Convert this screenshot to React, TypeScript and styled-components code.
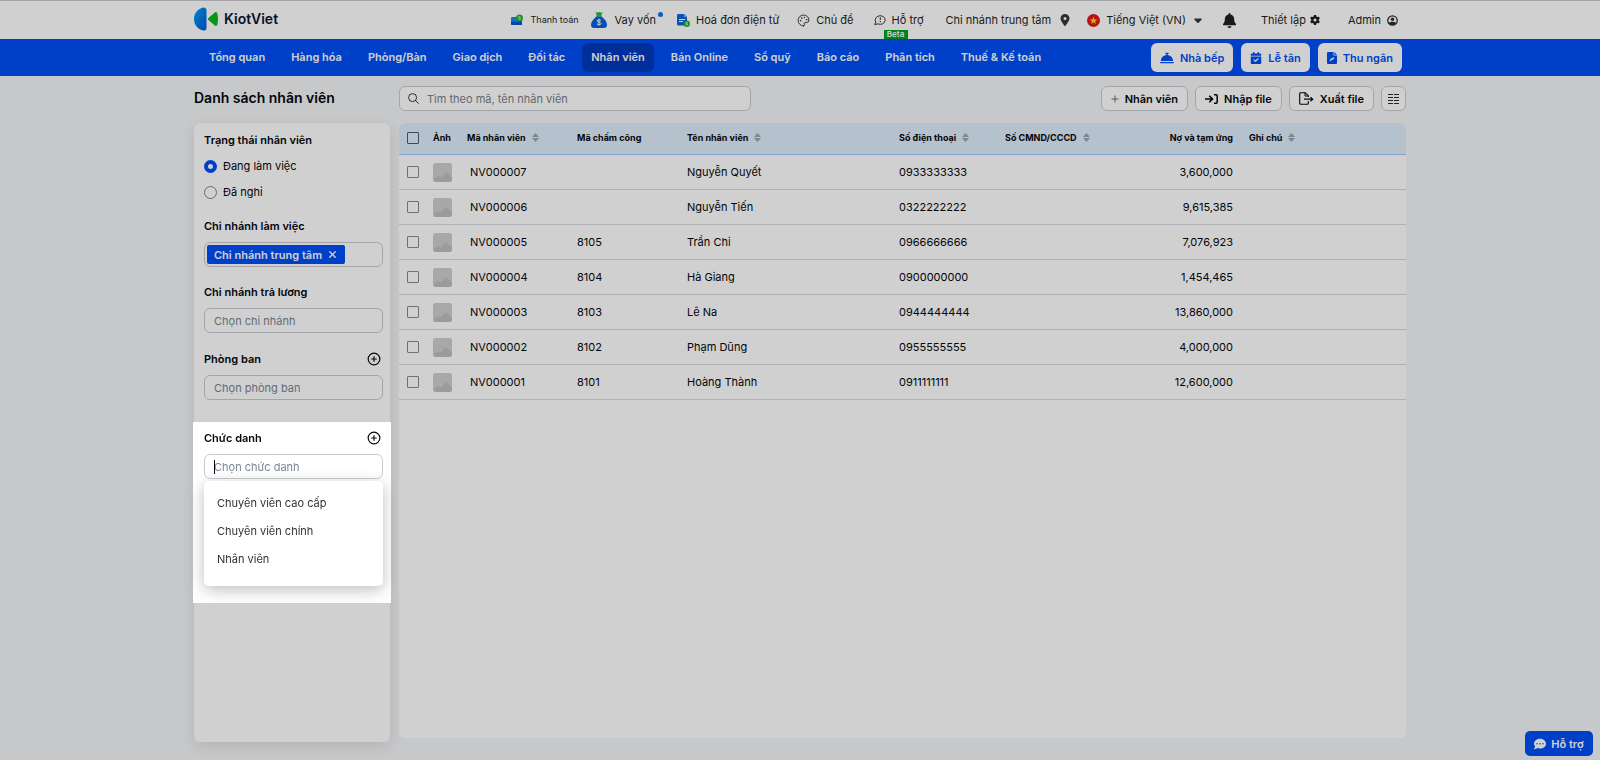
import React from "react";
import styled, { createGlobalStyle } from "styled-components";
import {
  FaBell,
  FaBellConcierge,
  FaCalendarCheck,
  FaCaretDown,
  FaCommentDots,
  FaGear,
  FaLocationDot,
  FaXmark,
} from "react-icons/fa6";
import { IoSearchOutline } from "react-icons/io5";
import { CirclePlus, Palette } from "lucide-react";

const BLUE = "#004ff5";
const LINE = "#c9cbcf";

const GlobalStyle = createGlobalStyle`
  *, *::before, *::after { box-sizing: border-box; }
  body {
    margin: 0;
    background: #f4f5f7;
    color: #05070b;
    font-family: Inter, "Noto Sans", sans-serif;
    font-size: 11px;
    line-height: 16px;
  }
  button, input { font: inherit; color: inherit; }
  button { cursor: pointer; }
  a { color: inherit; text-decoration: none; }
  svg { display: block; flex: none; }
`;

const Page = styled.div`
  display: flex;
  flex-direction: column;
  min-height: 100vh;
`;

const Container = styled.div`
  width: 100%;
  max-width: 1212px;
  margin: 0 auto;
`;

/* ---------- top header ---------- */

const Header = styled.header`
  background: #fff;
  border-top: 1px solid #c8c8c8;
`;

const HeaderInner = styled(Container)`
  display: flex;
  align-items: center;
  justify-content: space-between;
  height: 38px;
`;

const Brand = styled.a`
  display: flex;
  align-items: center;
  gap: 6px;
  padding-bottom: 2px;
  font-size: 14px;
  font-weight: 600;
  color: #0a1633;
`;

const Tools = styled.div`
  display: flex;
  align-items: center;
  padding-right: 8px;
`;

const Tool = styled.a<{ $before?: number; $gap?: number; $small?: boolean }>`
  position: relative;
  display: flex;
  align-items: center;
  gap: ${(p) => p.$gap ?? 6}px;
  margin-left: ${(p) => p.$before ?? 18}px;
  font-size: ${(p) => (p.$small ? 9 : 11)}px;
  color: #1d1f24;
  white-space: nowrap;
`;

const NewDot = styled.i`
  align-self: flex-start;
  width: 5px;
  height: 5px;
  margin-left: -6px;
  border-radius: 50%;
  background: #0b78e0;
`;

const Beta = styled.span`
  position: absolute;
  left: 10px;
  top: 18px;
  width: 24px;
  height: 9px;
  background: #00a01e;
  color: #fff;
  font-size: 8px;
  font-weight: 600;
  line-height: 9px;
  text-align: center;
`;

/* ---------- navigation ---------- */

const NavBar = styled.nav`
  background: ${BLUE};
`;

const NavInner = styled(Container)`
  display: flex;
  align-items: center;
  justify-content: space-between;
  height: 37px;
  padding: 0 4px 0 6px;
`;

const NavGroup = styled.div`
  display: flex;
  gap: 8px;
`;

const NavLink = styled.a<{ $active?: boolean }>`
  padding: 0 9px;
  border-radius: 6px;
  background: ${(p) => (p.$active ? "#0039bd" : "transparent")};
  color: #fff;
  font-weight: 600;
  line-height: 29px;
  white-space: nowrap;
`;

const NavButton = styled.button`
  display: flex;
  align-items: center;
  gap: 6px;
  height: 29px;
  padding: 0 9px;
  border: 0;
  border-radius: 6px;
  background: #fff;
  color: ${BLUE};
  font-weight: 600;
  white-space: nowrap;
`;

/* ---------- body ---------- */

const Body = styled(Container)`
  flex: 1;
  display: grid;
  grid-template-columns: 196px minmax(0, 1fr);
  grid-template-rows: 25px 1fr;
  gap: 12px 9px;
  padding: 10px 0 18px;
`;

const Title = styled.h1`
  margin: 0;
  font-size: 14px;
  font-weight: 600;
  line-height: 24px;
`;

const Actions = styled.div`
  display: flex;
  justify-content: space-between;
`;

const SearchBox = styled.label`
  display: flex;
  align-items: center;
  gap: 7px;
  width: 352px;
  padding: 0 7px;
  border: 1px solid ${LINE};
  border-radius: 6px;
  background: #fff;

  input {
    flex: 1;
    border: 0;
    padding: 0;
    outline: 0;
    background: none;
  }
  input::placeholder { color: #7a8089; opacity: 1; }
`;

const ButtonRow = styled.div`
  display: flex;
  gap: 7px;
`;

const ActionButton = styled.button<{ $icon?: boolean }>`
  display: flex;
  align-items: center;
  justify-content: center;
  gap: 6px;
  height: 25px;
  padding: 0 ${(p) => (p.$icon ? 6 : 9)}px;
  border: 1px solid ${LINE};
  border-radius: 6px;
  background: #fff;
  font-weight: 600;
  white-space: nowrap;
`;

const Sidebar = styled.aside`
  border-radius: 6px;
  background: #fff;
  box-shadow: 0 4px 14px rgba(20, 24, 32, 0.1);
`;

const FilterGroup = styled.section`
  padding: 9px 8px 0 10px;
  margin-bottom: 8px;
`;

const GroupHead = styled.div`
  display: flex;
  align-items: center;
  justify-content: space-between;
  height: 17px;
  padding-right: 1px;
`;

const GroupTitle = styled.h2`
  margin: 0;
  font-size: 11px;
  font-weight: 600;
  line-height: 16px;
`;

const IconButton = styled.button`
  display: grid;
  place-items: center;
  padding: 0;
  border: 0;
  background: none;
`;

const RadioRow = styled.label`
  display: flex;
  align-items: center;
  gap: 6px;
  height: 16px;
  margin-top: 10px;

  input {
    appearance: none;
    width: 13px;
    height: 13px;
    margin: 0;
    border: 1px solid #7d828a;
    border-radius: 50%;
    background: #fff;
  }
  input:checked { border: 4px solid ${BLUE}; }
`;

const Field = styled.div`
  position: relative;
  display: flex;
  align-items: center;
  height: 25px;
  width: 179px;
  margin-top: 8px;
  padding: 0 2px;
  border: 1px solid ${LINE};
  border-radius: 6px;
  background: #fff;

  input {
    flex: 1;
    min-width: 0;
    padding: 0 7px;
    border: 0;
    outline: 0;
    background: none;
  }
  input::placeholder { color: #7b8698; opacity: 1; }
`;

const Tag = styled.span`
  display: flex;
  align-items: center;
  gap: 5px;
  height: 19px;
  padding: 0 7px;
  border-radius: 2px;
  background: ${BLUE};
  color: #fff;
  font-weight: 600;
  white-space: nowrap;
`;

const TextCursor = styled.i`
  position: absolute;
  left: 9px;
  top: 5px;
  width: 1px;
  height: 14px;
  background: #000;
`;

/* The highlighted step of the tour: its spread shadow dims the rest of the page. */
const Spotlight = styled.div`
  position: relative;
  z-index: 10;
  height: 181px;
  margin: 22px -1px 0;
  padding: 7px 9px 0 11px;
  background: #fff;
  box-shadow: 0 0 0 4000px rgba(0, 0, 0, 0.185);
`;

const Menu = styled.ul`
  position: absolute;
  left: 11px;
  top: 59px;
  width: 179px;
  height: 105px;
  margin: 0;
  padding: 8px 0;
  list-style: none;
  border-radius: 5px;
  background: #fff;
  box-shadow: 0 4px 16px rgba(0, 0, 0, 0.26);
`;

const MenuItem = styled.li`
  padding: 0 13px;
  color: #2f3237;
  line-height: 28px;
`;

const Panel = styled.main`
  margin-bottom: 4px;
  border-radius: 6px;
  background: #fff;
  overflow: hidden;
`;

const Table = styled.table`
  width: 100%;
  table-layout: fixed;
  border-collapse: separate;
  border-spacing: 0;

  th, td {
    padding: 0 8px;
    text-align: left;
    white-space: nowrap;
  }
  th {
    height: 32px;
    padding-bottom: 2px;
    border-bottom: 1px solid #a5caff;
    background: #dfedfd;
    font-size: 9px;
    font-weight: 700;
  }
  td {
    height: 35px;
    border-bottom: 1px solid #d8d9dd;
  }
  td:nth-child(3) { padding-left: 11px; }
  th:nth-child(8), td:nth-child(8) { text-align: right; }
`;

const Heading = styled.span`
  display: inline-flex;
  align-items: center;
  gap: 6px;
`;

const CheckBox = styled.input`
  appearance: none;
  display: block;
  width: 12px;
  height: 12px;
  margin: 0;
  border: 1px solid #868a91;
  border-radius: 1px;
  background: #fff;

  th & { background: transparent; border-color: #505a68; }
`;

const Support = styled.button`
  position: fixed;
  right: 7px;
  bottom: 4px;
  display: flex;
  align-items: center;
  justify-content: center;
  gap: 5px;
  width: 68px;
  height: 25px;
  padding: 0;
  border: 0;
  border-radius: 5px;
  background: ${BLUE};
  color: #fff;
  font-weight: 600;
`;

/* ---------- drawings ---------- */

const Logo = () => (
  <svg width="24" height="24" viewBox="0 0 24 24" aria-hidden="true">
    <defs>
      <linearGradient id="logoBlue" x1="0" y1="0" x2="1" y2="1">
        <stop offset="0" stopColor="#00a6f5" />
        <stop offset="1" stopColor="#0057e0" />
      </linearGradient>
    </defs>
    <path d="M9.500.5c1.700 0 3 .9 3 2.600v17.800c0 1.700-1.300 2.600-3 2.600C4 22.500 0 18 0 12S4 1.500 9.500.5z" fill="url(#logoBlue)" />
    <path d="M14.200 11.200l6.600-5.700c1-.8 2-.6 2.400.5 1.100 3.700 1.100 8.300 0 12-.4 1.100-1.400 1.300-2.400.5l-6.600-5.700c-.5-.5-.5-1.100 0-1.600z" fill="#0bb81c" />
  </svg>
);

const WalletIcon = () => (
  <svg width="12" height="12" viewBox="0 0 12 12" aria-hidden="true">
    <path d="M1 3h8l2 2v6H1a1 1 0 0 1-1-1V4a1 1 0 0 1 1-1z" fill="#1c86f5" />
    <path d="M0 8c3-1 5 1 11-1v4H1a1 1 0 0 1-1-1z" fill="#0754d4" />
    <circle cx="8.500" cy="4" r="3.500" fill="#19b92b" />
    <path d="M9.500 2.700H8.100c-1 0-1 1.300 0 1.300h.8c1 0 1 1.300 0 1.300H7.500" fill="none" stroke="#fff" strokeWidth=".7" />
  </svg>
);

const MoneyBagIcon = () => (
  <svg width="16" height="16" viewBox="0 0 16 16" aria-hidden="true">
    <path d="M4.500 0l2 .8L8 0l1.500.8 2-.8-1.500 3.500H6z" fill="#1ab32c" />
    <path d="M6 4.300h4c3 1.700 6 5.700 6 8.700 0 2-1.200 3-3 3H3c-1.800 0-3-1-3-3 0-3 3-7 6-8.700z" fill="#0963dc" />
    <path d="M5 3.400h6v1.100H5z" fill="#1ab32c" />
    <path d="M10 8.500C9 7.500 6.200 7.500 6.200 9s3.800.9 3.800 2.500-3 1.500-4 .4M8 6.800v6.800" fill="none" stroke="#fff" strokeWidth="1" />
  </svg>
);

const InvoiceIcon = () => (
  <svg width="13" height="13" viewBox="0 0 13 13" aria-hidden="true">
    <path d="M1.200 0H7l3 3v8.500H1.200A1.200 1.200 0 0 1 0 10.300V1.200A1.200 1.200 0 0 1 1.200 0z" fill="#0b66de" />
    <path d="M7 0l3 3H7z" fill="#7db7ff" />
    <path d="M2 5.500h6M2 7.500h4" stroke="#fff" strokeWidth="1" />
    <circle cx="9.800" cy="9.800" r="3.200" fill="#1ab32c" />
    <path d="M10.800 8.600H9.500c-1 0-1 1.200 0 1.200h.5c1 0 1 1.200 0 1.200H8.800" fill="none" stroke="#fff" strokeWidth=".7" />
  </svg>
);

const HelpBubbleIcon = () => (
  <svg width="12" height="12" viewBox="0 0 12 12" fill="none" stroke="#33363b" aria-hidden="true">
    <path d="M.7 10.500l1.100-2.400A5 4.300 0 1 1 4 9.900z" strokeWidth="1" strokeLinejoin="round" />
    <path d="M6.300 3.200v2.800M6.300 7v1.200" strokeWidth="1.100" />
  </svg>
);

const FlagIcon = () => (
  <svg width="13" height="13" viewBox="0 0 13 13" aria-hidden="true">
    <circle cx="6.500" cy="6.500" r="6.500" fill="#e3131c" />
    <path d="M6.500 2.500l1 2.900h3L8.100 7.200l.9 2.900-2.500-1.800L4 10.100l.9-2.900L2.500 5.400h3z" fill="#ffe000" />
  </svg>
);

const AccountIcon = () => (
  <svg width="11" height="11" viewBox="0 0 11 11" aria-hidden="true">
    <circle cx="5.500" cy="5.500" r="4.700" fill="none" stroke="#2a2d32" strokeWidth="1.300" />
    <circle cx="5.500" cy="4.300" r="1.700" fill="#2a2d32" />
    <path d="M1.800 8.200c1.800-1.900 5.600-1.900 7.400 0-1.600 2.500-5.800 2.500-7.400 0z" fill="#2a2d32" />
  </svg>
);

const CashierIcon = () => (
  <svg width="10" height="12" viewBox="0 0 10 12" aria-hidden="true">
    <path d="M1 0h5.500v3.500H10V11a1 1 0 0 1-1 1H1a1 1 0 0 1-1-1V1a1 1 0 0 1 1-1z" fill="currentColor" />
    <path d="M7.300 0L10 2.700H7.300z" fill="currentColor" />
    <path d="M2.500 9.500l1-2.200 3-2.300 1 1.200-3.200 2.300z" fill="#fff" />
  </svg>
);

const PlusIcon = () => (
  <svg width="8" height="8" viewBox="0 0 8 8" stroke="#6a6e75" aria-hidden="true">
    <path d="M4 .5v7M.5 4h7" />
  </svg>
);

const ImportIcon = () => (
  <svg width="13" height="12" viewBox="0 0 13 12" fill="none" stroke="currentColor" aria-hidden="true">
    <path d="M0 6h7.500M4.300 2.800L7.500 6 4.300 9.200" strokeWidth="1.600" />
    <path d="M9 1.700h2.200a1 1 0 0 1 1 1v6.600a1 1 0 0 1-1 1H9" strokeWidth="1.500" />
  </svg>
);

const ExportIcon = () => (
  <svg width="15" height="13" viewBox="0 0 15 13" fill="none" stroke="currentColor" aria-hidden="true">
    <path d="M9.300 9v2.300a1 1 0 0 1-1 1H1.700a1 1 0 0 1-1-1V1.700a1 1 0 0 1 1-1h4.600l3 3V5" strokeWidth="1.100" />
    <path d="M6 .7V4h3.300" strokeWidth="1" />
    <path d="M5 7.200h8M11.500 5.200l2.200 2-2.200 2" strokeWidth="1.200" />
  </svg>
);

const ColumnsIcon = () => (
  <svg width="11" height="11" viewBox="0 0 11 11" stroke="#2a2d32" aria-hidden="true">
    <path d="M0 1.500h5M6 1.500h5M0 4.500h5M6 4.500h5M0 7.500h5M6 7.500h5M0 10.500h5M6 10.500h5" />
  </svg>
);

const SortIcon = () => (
  <svg width="7" height="9" viewBox="0 0 7 9" fill="#9aa3b0" aria-hidden="true">
    <path d="M3.500 0L7 4H0zM3.500 9L0 5h7z" />
  </svg>
);

const Thumbnail = () => (
  <svg width="19" height="19" viewBox="0 0 19 19" role="img" aria-label="Ảnh">
    <rect width="19" height="19" rx="2.500" fill="#cecece" />
    <path d="M1 16l4-3 3 1.500L13 9l6 5.500V16a3 3 0 0 1-3 3H3a2 2 0 0 1-2-2z" fill="#bfbfbf" />
  </svg>
);

/* ---------- data ---------- */

const NAV = [
  "Tổng quan",
  "Hàng hóa",
  "Phòng/Bàn",
  "Giao dịch",
  "Đối tác",
  "Nhân viên",
  "Bán Online",
  "Sổ quỹ",
  "Báo cáo",
  "Phân tích",
  "Thuế & Kế toán",
];

const COLUMNS: { label: string; width?: number; sort?: boolean }[] = [
  { label: "Ảnh", width: 34 },
  { label: "Mã nhân viên", width: 110, sort: true },
  { label: "Mã chấm công", width: 110 },
  { label: "Tên nhân viên", width: 212, sort: true },
  { label: "Số điện thoại", width: 106, sort: true },
  { label: "Số CMND/CCCD", width: 108, sort: true },
  { label: "Nợ và tạm ứng", width: 136 },
  { label: "Ghi chú", sort: true },
];

const EMPLOYEES = [
  ["NV000007", "", "Nguyễn Quyết", "0933333333", "3,600,000"],
  ["NV000006", "", "Nguyễn Tiến", "0322222222", "9,615,385"],
  ["NV000005", "8105", "Trần Chi", "0966666666", "7,076,923"],
  ["NV000004", "8104", "Hà Giang", "0900000000", "1,454,465"],
  ["NV000003", "8103", "Lê Na", "0944444444", "13,860,000"],
  ["NV000002", "8102", "Phạm Dũng", "0955555555", "4,000,000"],
  ["NV000001", "8101", "Hoàng Thành", "0911111111", "12,600,000"],
];

const ROLES = ["Chuyên viên cao cấp", "Chuyên viên chính", "Nhân viên"];

export default function App() {
  return (
    <Page>
      <GlobalStyle />
      <Header>
        <HeaderInner>
          <Brand href="#">
            <Logo />
            KiotViet
          </Brand>
          <Tools>
            <Tool href="#" $gap={8} $small>
              <WalletIcon />
              Thanh toán
            </Tool>
            <Tool href="#" $before={12} $gap={8}>
              <MoneyBagIcon />
              Vay vốn
              <NewDot />
            </Tool>
            <Tool href="#" $before={14}>
              <InvoiceIcon />
              Hoá đơn điện tử
            </Tool>
            <Tool href="#">
              <Palette size={13} strokeWidth={1.8} color="#33363b" />
              Chủ đề
            </Tool>
            <Tool href="#" $before={20}>
              <HelpBubbleIcon />
              Hỗ trợ
              <Beta>Beta</Beta>
            </Tool>
            <Tool href="#" $before={22} $gap={8}>
              Chi nhánh trung tâm
              <FaLocationDot size={12} color="#33363b" />
            </Tool>
            <Tool href="#" $before={16}>
              <FlagIcon />
              Tiếng Việt (VN)
              <FaCaretDown size={12} color="#33363b" />
            </Tool>
            <Tool href="#" aria-label="Thông báo">
              <FaBell size={15} />
            </Tool>
            <Tool href="#" $before={24} $gap={4}>
              Thiết lập
              <FaGear size={10} />
            </Tool>
            <Tool href="#" $before={28}>
              Admin
              <AccountIcon />
            </Tool>
          </Tools>
        </HeaderInner>
      </Header>

      <NavBar>
        <NavInner>
          <NavGroup>
            {NAV.map((label) => (
              <NavLink key={label} href="#" $active={label === "Nhân viên"}>
                {label}
              </NavLink>
            ))}
          </NavGroup>
          <NavGroup>
            <NavButton>
              <FaBellConcierge size={14} />
              Nhà bếp
            </NavButton>
            <NavButton>
              <FaCalendarCheck size={12} />
              Lễ tân
            </NavButton>
            <NavButton>
              <CashierIcon />
              Thu ngân
            </NavButton>
          </NavGroup>
        </NavInner>
      </NavBar>

      <Body>
        <Title>Danh sách nhân viên</Title>
        <Actions>
          <SearchBox>
            <IoSearchOutline size={13} />
            <input type="text" aria-label="Tìm kiếm" placeholder="Tìm theo mã, tên nhân viên" />
          </SearchBox>
          <ButtonRow>
            <ActionButton>
              <PlusIcon />
              Nhân viên
            </ActionButton>
            <ActionButton>
              <ImportIcon />
              Nhập file
            </ActionButton>
            <ActionButton>
              <ExportIcon />
              Xuất file
            </ActionButton>
            <ActionButton $icon aria-label="Chọn cột">
              <ColumnsIcon />
            </ActionButton>
          </ButtonRow>
        </Actions>

        <Sidebar>
          <FilterGroup>
            <GroupTitle>Trạng thái nhân viên</GroupTitle>
            <RadioRow>
              <input type="radio" name="status" defaultChecked />
              Đang làm việc
            </RadioRow>
            <RadioRow>
              <input type="radio" name="status" />
              Đã nghỉ
            </RadioRow>
          </FilterGroup>
          <FilterGroup>
            <GroupHead>
              <GroupTitle id="branch">Chi nhánh làm việc</GroupTitle>
            </GroupHead>
            <Field>
              <Tag>
                Chi nhánh trung tâm
                <IconButton aria-label="Bỏ chọn">
                  <FaXmark size={11} color="#fff" />
                </IconButton>
              </Tag>
              <input type="text" aria-labelledby="branch" />
            </Field>
          </FilterGroup>
          <FilterGroup>
            <GroupTitle id="payBranch">Chi nhánh trả lương</GroupTitle>
            <Field>
              <input type="text" aria-labelledby="payBranch" placeholder="Chọn chi nhánh" />
            </Field>
          </FilterGroup>
          <FilterGroup>
            <GroupHead>
              <GroupTitle id="department">Phòng ban</GroupTitle>
              <IconButton aria-label="Thêm phòng ban">
                <CirclePlus size={14} />
              </IconButton>
            </GroupHead>
            <Field>
              <input type="text" aria-labelledby="department" placeholder="Chọn phòng ban" />
            </Field>
          </FilterGroup>
          <Spotlight>
            <GroupHead>
              <GroupTitle id="role">Chức danh</GroupTitle>
              <IconButton aria-label="Thêm chức danh">
                <CirclePlus size={14} />
              </IconButton>
            </GroupHead>
            <Field>
              <input type="text" aria-labelledby="role" placeholder="Chọn chức danh" />
              <TextCursor />
            </Field>
            <Menu>
              {ROLES.map((role) => (
                <MenuItem key={role}>{role}</MenuItem>
              ))}
            </Menu>
          </Spotlight>
        </Sidebar>

        <Panel>
          <Table>
            <colgroup>
              <col style={{ width: 26 }} />
              {COLUMNS.map((c) => (
                <col key={c.label} style={{ width: c.width }} />
              ))}
            </colgroup>
            <thead>
              <tr>
                <th>
                  <CheckBox type="checkbox" aria-label="Chọn tất cả" />
                </th>
                {COLUMNS.map((c) => (
                  <th key={c.label}>
                    <Heading>
                      {c.label}
                      {c.sort && <SortIcon />}
                    </Heading>
                  </th>
                ))}
              </tr>
            </thead>
            <tbody>
              {EMPLOYEES.map(([code, clock, name, phone, debt]) => (
                <tr key={code}>
                  <td>
                    <CheckBox type="checkbox" aria-label={code} />
                  </td>
                  <td>
                    <Thumbnail />
                  </td>
                  <td>{code}</td>
                  <td>{clock}</td>
                  <td>{name}</td>
                  <td>{phone}</td>
                  <td />
                  <td>{debt}</td>
                  <td />
                </tr>
              ))}
            </tbody>
          </Table>
        </Panel>
      </Body>

      <Support>
        <FaCommentDots size={12} />
        Hỗ trợ
      </Support>
    </Page>
  );
}
